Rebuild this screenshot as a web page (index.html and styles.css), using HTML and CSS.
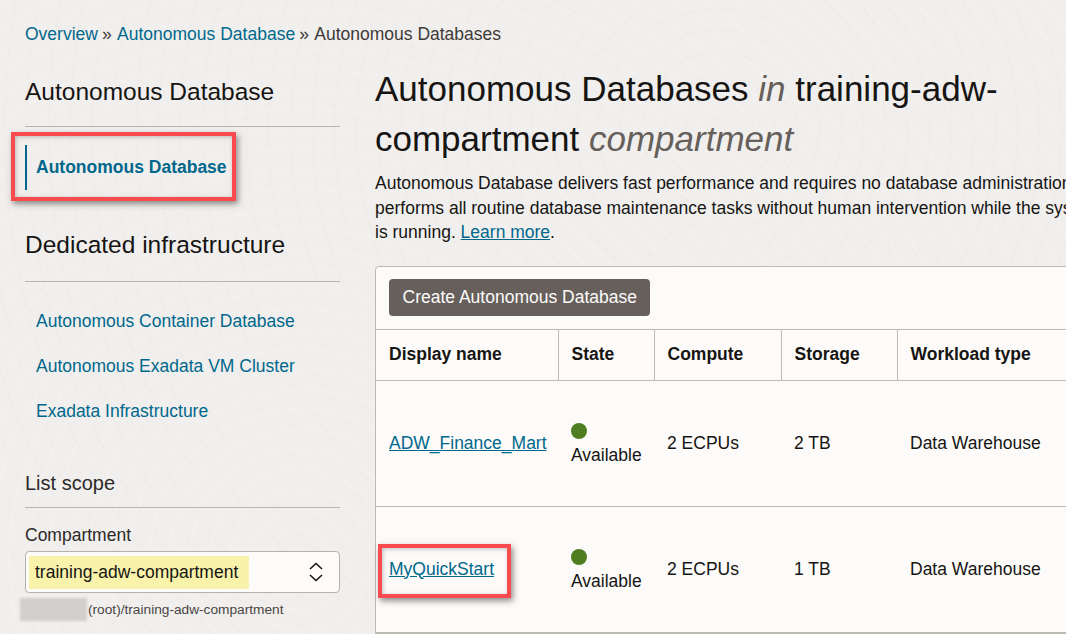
FILE: index.html
```html
<!DOCTYPE html>
<html lang="en">

<head>
  <meta charset="UTF-8" />
  <title>Autonomous Databases</title>
  <link rel="stylesheet" href="styles.css">
</head>

<body>
  <div class="page-wrap">
    <nav class="breadcrumbs">
      <a href="#">Overview</a><span class="sep">»</span>
      <a href="#">Autonomous Database</a><span class="sep">»</span>
      <span>Autonomous Databases</span>
    </nav>

    <div class="columns">
      <aside class="sidebar">
        <h2 class="side-title">Autonomous Database</h2>
        <div class="side-item active">
          <a href="#">Autonomous Database</a>
          <span class="callout callout-nav"></span>
        </div>

        <h2 class="side-title second">Dedicated infrastructure</h2>
        <ul class="side-list">
          <li><a href="#">Autonomous Container Database</a></li>
          <li><a href="#">Autonomous Exadata VM Cluster</a></li>
          <li><a href="#">Exadata Infrastructure</a></li>
        </ul>

        <h3 class="scope-title">List scope</h3>
        <label class="field-label">Compartment</label>
        <div class="select-box">
          <span class="select-value">training-adw-compartment</span>
          <svg class="select-icon" width="16" height="22" viewBox="0 0 16 22">
            <path d="M2 8 L8 2.5 L14 8 M2 14 L8 19.5 L14 14" fill="none" stroke="#161513" stroke-width="1.6" />
          </svg>
        </div>
        <div class="select-path"><span class="blurred"></span>(root)/training-adw-compartment</div>
      </aside>

      <main class="content">
        <h1>Autonomous Databases <em>in</em> training-adw-compartment <em>compartment</em></h1>
        <p class="intro">
          Autonomous Database delivers fast performance and requires no database administration. Oracle Cloud<br>
          performs all routine database maintenance tasks without human intervention while the system<br>
          is running. <a href="#">Learn more</a>.
        </p>

        <div class="panel">
          <div class="actions">
            <button type="button">Create Autonomous Database</button>
          </div>
          <table>
            <colgroup>
              <col class="col-name">
              <col class="col-state">
              <col class="col-compute">
              <col class="col-storage">
              <col class="col-type">
            </colgroup>
            <thead>
              <tr>
                <th>Display name</th>
                <th>State</th>
                <th>Compute</th>
                <th>Storage</th>
                <th>Workload type</th>
              </tr>
            </thead>
            <tbody>
              <tr>
                <td><a href="#">ADW_Finance_Mart</a></td>
                <td><span class="dot"></span>Available</td>
                <td>2 ECPUs</td>
                <td>2 TB</td>
                <td>Data Warehouse</td>
              </tr>
              <tr>
                <td><span class="name-wrap"><a href="#">MyQuickStart</a><span class="callout callout-row"></span></span></td>
                <td><span class="dot"></span>Available</td>
                <td>2 ECPUs</td>
                <td>1 TB</td>
                <td>Data Warehouse</td>
              </tr>
            </tbody>
          </table>
        </div>
      </main>
    </div>
  </div>
</body>

</html>
```

FILE: styles.css
```css
html, body {
  margin: 0;
  height: 100%;
}

body {
  font-family: "Liberation Sans", Arial, sans-serif;
  font-size: 17.5px;
  line-height: 24px;
  color: #161513;
  background-color: #f1efed;
  background-image:
    repeating-radial-gradient(circle at 300px 560px, rgba(255,255,255,0) 0 9px, rgba(255,255,255,0.14) 10px 11px, rgba(255,255,255,0) 12px 20px),
    repeating-radial-gradient(circle at 720px 130px, rgba(210,206,200,0) 0 10px, rgba(210,206,200,0.07) 11px 12px, rgba(210,206,200,0) 13px 22px);
  overflow: hidden;
}

a {
  color: #00688c;
  text-decoration: none;
}

.page-wrap {
  width: 1066px;
  height: 634px;
  overflow: hidden;
  padding: 22px 0 0 25px;
  box-sizing: border-box;
}

.breadcrumbs {
  height: 24px;
  color: #3d3a38;
}

.breadcrumbs .sep {
  margin: 0 1.5px 0 4px;
  color: #3d3a38;
}

.columns {
  display: flex;
  gap: 35px;
  margin-top: 18px;
}

.sidebar {
  flex: 0 0 315px;
}

.side-title {
  margin: 0;
  padding: 13px 0 19px;
  font-size: 24.5px;
  line-height: 30px;
  font-weight: 400;
  border-bottom: 1px solid #b8b4ae;
}

.side-title.second {
  margin-top: 27px;
  padding-bottom: 21px;
}

.side-item {
  position: relative;
  margin-top: 18px;
  padding: 10px 0 9px 9px;
  border-left: 2px solid #00688c;
  height: 26px;
}

.side-item a {
  font-weight: 700;
}

/* red annotation boxes drawn on the screenshot */
.callout {
  position: absolute;
  border: 4px solid #f94a4d;
  box-shadow: 2px 3px 6px rgba(60, 50, 50, 0.55), inset 1px 1px 4px rgba(60, 50, 50, 0.3);
  box-sizing: border-box;
}

.callout-nav {
  left: -16px;
  top: -13px;
  width: 225px;
  height: 69px;
}

.side-list {
  list-style: none;
  margin: 17px 0 0;
  padding: 0 0 0 11px;
}

.side-list li {
  height: 45px;
  line-height: 45px;
}

.scope-title {
  margin: 36px 0 0;
  padding-bottom: 11px;
  font-size: 20px;
  line-height: 26px;
  font-weight: 400;
  border-bottom: 1px solid #b8b4ae;
  color: #2b2927;
}

.field-label {
  display: block;
  margin-top: 15px;
  color: #2b2927;
}

.select-box {
  display: flex;
  align-items: center;
  justify-content: space-between;
  height: 42px;
  margin-top: 4px;
  padding: 0 15px 0 3px;
  background: #fcfbfa;
  border: 1px solid #b5b1ab;
  border-radius: 4px;
  box-sizing: border-box;
}

.select-value {
  padding: 0 11px 0 6px;
  height: 33px;
  line-height: 33px;
  background: #f8f2ab;
}

.select-path {
  display: flex;
  align-items: center;
  margin: 5px 0 0 -5px;
  height: 23px;
  font-size: 13.7px;
  color: #4a4643;
}

.blurred {
  width: 67px;
  height: 23px;
  margin-right: 1px;
  background: #d2d0ce;
  filter: blur(1px);
}

.content {
  flex: 0 0 760px;
}

h1 {
  margin: 0;
  width: 660px;
  font-size: 35px;
  line-height: 50px;
  font-weight: 400;
}

h1 em {
  color: #665f5b;
}

.intro {
  margin: 7px 0 0;
  line-height: 24.5px;
  white-space: nowrap;
}

.intro a {
  text-decoration: underline;
}

.panel {
  margin-top: 21.5px;
  background: #fcfbf9;
  border: 1px solid #bdb9b3;
  border-radius: 4px 0 0 0;
}

.actions {
  padding: 12px 13px;
  height: 38px;
  border-bottom: 1px solid #bdb9b3;
}

button {
  height: 37px;
  padding: 0 13.5px;
  background-color: #665f5b;
  color: #fcfbfa;
  font-family: inherit;
  font-size: 17.5px;
  border: none;
  border-radius: 4px;
}

table {
  border-collapse: collapse;
  table-layout: fixed;
  width: 760px;
}

.col-name { width: 182px; }
.col-state { width: 96px; }
.col-compute { width: 127px; }
.col-storage { width: 116px; }
.col-type { width: 239px; }

th {
  height: 48px;
  padding: 0 13px 2px;
  text-align: left;
  font-weight: 700;
  border-bottom: 1px solid #bdb9b3;
  border-left: 1px solid #bdb9b3;
}

th:first-child {
  border-left: none;
}

td {
  height: 123px;
  padding: 0 13px 2px;
  border-bottom: 1px solid #bdb9b3;
  white-space: nowrap;
}

td a {
  text-decoration: underline;
}

.dot {
  display: block;
  width: 16px;
  height: 16px;
  margin: 5px 0 4px;
  border-radius: 50%;
  background: #4f7d22;
}

.name-wrap {
  position: relative;
  display: inline-block;
}

.callout-row {
  left: -11px;
  top: -13px;
  width: 133px;
  height: 54px;
}
```
